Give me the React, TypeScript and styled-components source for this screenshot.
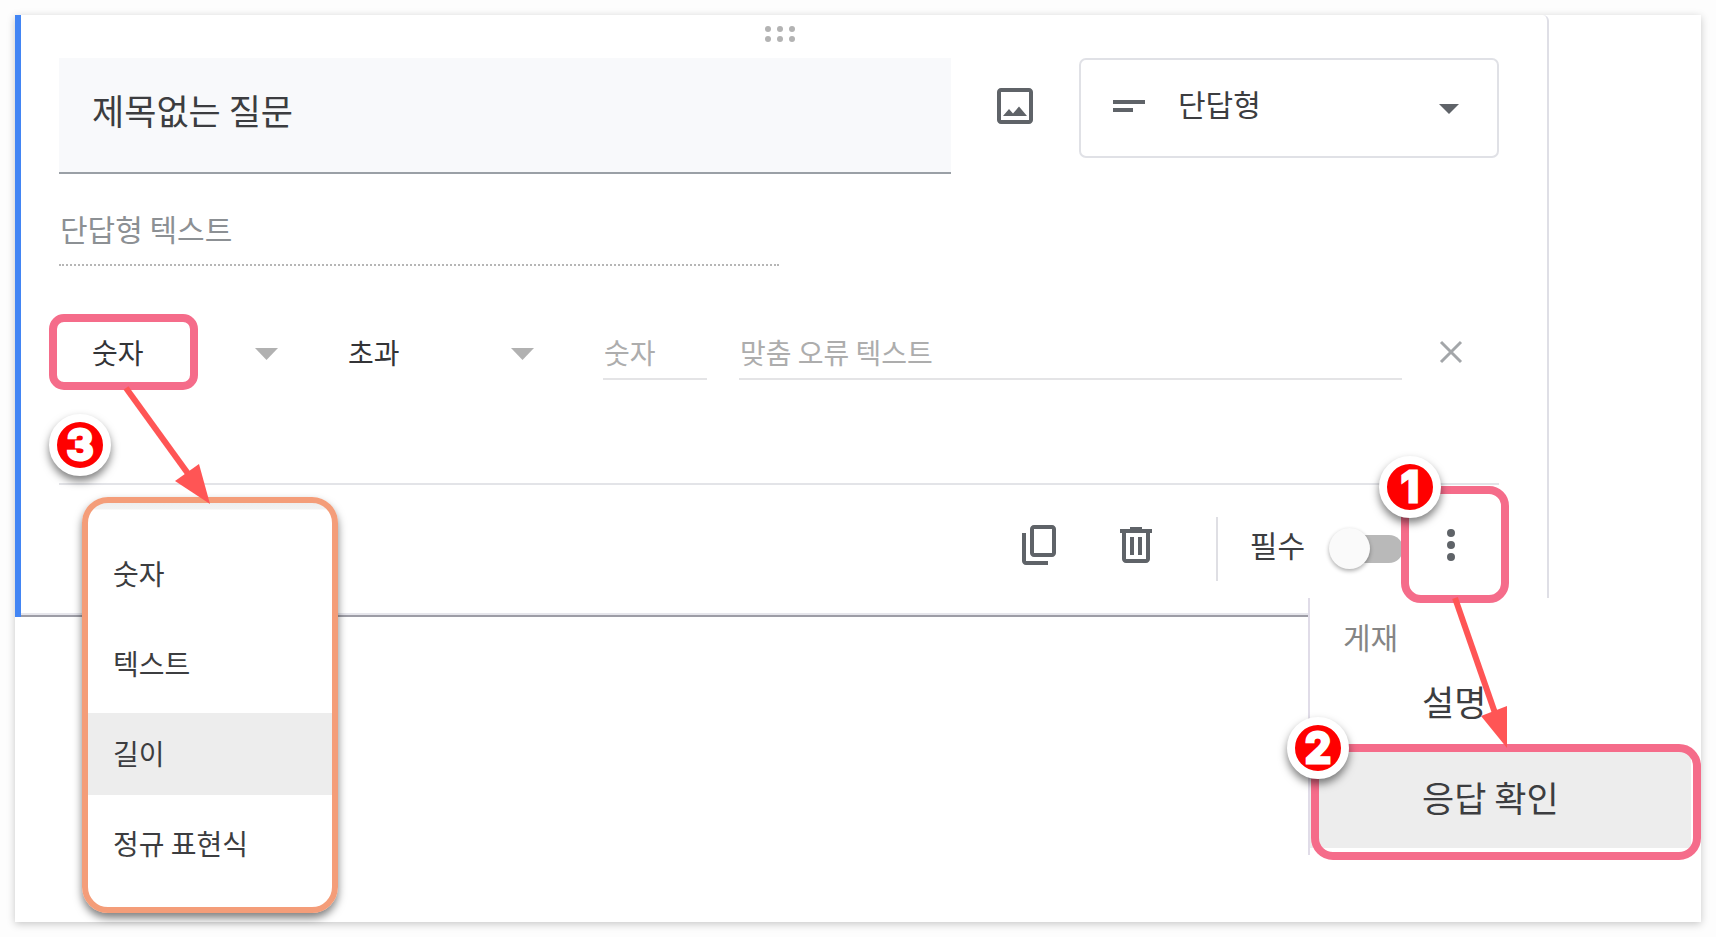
import React from 'react';
import styled, { createGlobalStyle, css } from 'styled-components';

const PINK = '#f56c8a';
const ICON_GREY = '#5f6368';

const GlobalStyle = createGlobalStyle`
  *, *::before, *::after { box-sizing: border-box; }
  body {
    margin: 0;
    background: #fdfdfd;
    color: #3c3d40;
    font-family: "Noto Sans CJK KR", "Noto Sans", sans-serif;
  }
  button, input, select {
    font: inherit;
    color: inherit;
    margin: 0;
    padding: 0;
    border: 0;
    border-radius: 0;
    background: none;
    outline: none;
  }
  button, select { cursor: pointer; }
  ul { list-style: none; margin: 0; padding: 0; }
`;

const Page = styled.div`
  min-height: 100vh;
  padding: 15px;
  display: flex;
`;

const Sheet = styled.main`
  flex: 1;
  min-width: 0;
  background: #fff;
  padding-right: 152px;
  box-shadow: 0 2px 8px rgba(0, 0, 0, 0.22);
`;

const Card = styled.section`
  display: flex;
`;

const Accent = styled.div`
  flex: 0 0 6px;
  background: #4285f4;
`;

const CardBody = styled.div`
  flex: 1;
  min-width: 0;
  padding: 0 48px 0 38px;
  border-right: 2px solid #dfdfe6;
  border-bottom: 2px solid #9d9da6;
  border-top-right-radius: 6px;
  box-shadow: inset 0 -2px 0 #e6e6ec;
`;

const Grip = styled.div`
  height: 43px;
  padding: 10px 0 0 2px;
  display: flex;
  justify-content: center;
`;

const HeadRow = styled.div`
  display: flex;
  align-items: flex-start;
  gap: 40px;
`;

const TitleInput = styled.input`
  && {
    flex: 1;
    min-width: 0;
    height: 116px;
    padding: 0 33px 12px;
    font-size: 35px;
    background: #f8f9fb;
    border-bottom: 2px solid #9aa0a6;
  }
`;

const IconButton = styled.button<{ $size?: number; $offset?: number }>`
  flex: none;
  width: ${p => p.$size ?? 48}px;
  height: 56px;
  margin-top: ${p => p.$offset ?? 0}px;
  display: flex;
  justify-content: center;
  align-items: flex-start;
`;

const TypeField = styled.label`
  position: relative;
  flex: none;
  width: 420px;
  height: 100px;
  display: flex;
  align-items: flex-start;
  border: 2px solid #e0e1e6;
  border-radius: 7px;

  > svg { position: absolute; top: 22px; pointer-events: none; }
  > svg:first-child { left: 24px; }
  > svg:last-child { right: 24px; top: 24px; }
`;

const TypeSelect = styled.select`
  && {
    appearance: none;
    width: 100%;
    height: 96px;
    padding: 0 80px 10px 97px;
    font-size: 30px;
  }
`;

const AnswerInput = styled.input`
  && {
    display: block;
    width: 50%;
    height: 64px;
    margin-top: 28px;
    padding: 0 1px 10px;
    font-size: 30px;
    border-bottom: 2px dotted #b6b6b6;
  }
  &::placeholder { color: #8c9094; opacity: 1; }
`;

const RuleRow = styled.div`
  display: flex;
  align-items: center;
  gap: 32px;
  height: 64px;
  margin-top: 56px;
  padding-right: 29px;
`;

const RuleSelects = styled.div`
  display: flex;
  flex: none;
`;

const RuleField = styled.div`
  position: relative;
  width: 256px;
  height: 64px;

  > label > svg { position: absolute; right: 37px; top: 26px; pointer-events: none; }
`;

const RuleSelect = styled.select`
  && {
    appearance: none;
    width: 100%;
    height: 64px;
    padding: 0 60px 4px 33px;
    font-size: 28px;
    color: #333437;
  }
`;

const RuleInput = styled.input<{ $grow?: boolean }>`
  && {
    ${p => (p.$grow ? css`flex: 1;` : css`flex: 0 0 104px;`)}
    min-width: 0;
    width: 104px;
    height: 52px;
    padding: 0 1px 2px;
    font-size: 28px;
    border-bottom: 2px solid #e4e4e6;
  }
  &::placeholder { color: #adadad; opacity: 1; }
`;

const Footer = styled.footer`
  height: 132px;
  margin-top: 97px;
  padding: 0 24px 2px 0;
  display: flex;
  align-items: center;
  justify-content: flex-end;
  gap: 24px;
  border-top: 2px solid #e3e4e8;
`;

const Actions = styled.div`
  display: flex;
  gap: 48px;
`;

const Separator = styled.div`
  width: 2px;
  height: 64px;
  margin: 0 8px 0 32px;
  background: #dfdfe4;
`;

const RequiredLabel = styled.label`
  display: flex;
  align-items: center;
  gap: 24px;
  font-size: 30px;
`;

const RequiredText = styled.span`
  padding-bottom: 10px;
  line-height: 44px;
`;

const Switch = styled.input`
  && {
    appearance: none;
    position: relative;
    width: 74px;
    height: 42px;
  }
  &::before {
    content: '';
    position: absolute;
    inset: 7px 0 7px 8px;
    border-radius: 14px;
    background: #b9b9b9;
  }
  &::after {
    content: '';
    position: absolute;
    left: 0;
    top: 0;
    width: 41px;
    height: 41px;
    border-radius: 50%;
    background: #fafafa;
    box-shadow: 0 2px 4px rgba(0, 0, 0, 0.32);
  }
  &:checked::after { left: 33px; }
`;

const MoreAnchor = styled.div`
  position: relative;
`;

const Ring = styled.span<{ $inset: string; $radius: number }>`
  position: absolute;
  z-index: 2;
  inset: ${p => p.$inset};
  border: 8px solid ${PINK};
  border-radius: ${p => p.$radius}px;
  pointer-events: none;
`;

const Badge = styled.span<{ $left: number; $top: number }>`
  position: absolute;
  left: ${p => p.$left}px;
  top: ${p => p.$top}px;
  z-index: 4;
  width: 62px;
  height: 62px;
  display: flex;
  align-items: center;
  justify-content: center;
  border: 8px solid #fff;
  border-radius: 50%;
  background: #f00;
  color: #fff;
  font: 700 42px/46px Inter, sans-serif;
  -webkit-text-stroke: 3px #fff;
  stroke-linejoin: round;
  box-shadow: 0 5px 8px rgba(0, 0, 0, 0.5);
  pointer-events: none;
`;

const ArrowLayer = styled.svg`
  position: absolute;
  left: -1px;
  top: 0;
  z-index: 3;
  overflow: visible;
  pointer-events: none;
`;

const TypeMenu = styled.ul`
  position: absolute;
  z-index: 2;
  left: 23px;
  top: 175px;
  width: 256px;
  padding: 30px 0 22px;
  display: flex;
  flex-direction: column;
  gap: 8px;
  border: 6px solid #f49d79;
  border-radius: 26px;
  background: linear-gradient(#eee, #f2f2f2 6px, #fff 7px);
  box-shadow: 0 5px 9px rgba(0, 0, 0, 0.5);
`;

const TypeOption = styled.button<{ $active?: boolean }>`
  && {
    display: block;
    width: 100%;
    height: 82px;
    padding: 0 25px 2px;
    font-size: 28px;
    text-align: left;
    background: ${p => (p.$active ? '#ededed' : 'none')};
  }
`;

const MoreMenu = styled.div`
  position: absolute;
  z-index: 1;
  top: 77px;
  right: -226px;
  width: 393px;
  padding: 18px 10px 7px 0;
  border-left: 2px solid #e0dce8;
  background: #fff;
`;

const MoreHeading = styled.div`
  padding-left: 33px;
  font-size: 30px;
  line-height: 40px;
  color: #858585;
`;

const MoreItem = styled.li`
  position: relative;
`;

const MoreOption = styled.button<{ $active?: boolean }>`
  && {
    display: block;
    width: 100%;
    height: 96px;
    padding: 0 0 8px 112px;
    font-size: 35px;
    text-align: left;
    background: ${p => (p.$active ? '#ededed' : 'none')};
  }
`;

const Icon = ({ d, size = 48 }: { d: string; size?: number }) => (
  <svg width={size} height={size} viewBox="0 0 24 24" fill={ICON_GREY} aria-hidden="true">
    <path fillRule="evenodd" d={d} />
  </svg>
);

const icons = {
  image:
    'M19 3H5c-1.1 0-2 .9-2 2v14c0 1.1.9 2 2 2h14c1.1 0 2-.9 2-2V5c0-1.1-.9-2-2-2zm0 16H5V5h14v14zM14 12.3l-3 3.5-2-2.3L6 17h12l-4-4.7z',
  shortText: 'M4 9h16v2H4zM4 13h10v2H4z',
  dropDown: 'M7 10l5 5 5-5z',
  copy:
    'M18 2H9c-1.1 0-2 .9-2 2v12c0 1.1.9 2 2 2h9c1.1 0 2-.9 2-2V4c0-1.1-.9-2-2-2zm0 14H9V4h9v12zM3 6h2v14h11v2H5c-1.1 0-2-.9-2-2V6z',
  trash:
    'M15 4V3H9v1H4v2h1v13c0 1.1.9 2 2 2h10c1.1 0 2-.9 2-2V6h1V4h-5zm2 15H7V6h10v13zM9 8h2v9H9zM13 8h2v9h-2z',
  more:
    'M12 8a2 2 0 1 0 0-4 2 2 0 0 0 0 4zM12 14a2 2 0 1 0 0-4 2 2 0 0 0 0 4zM12 20a2 2 0 1 0 0-4 2 2 0 0 0 0 4z',
};

const SmallCaret = () => (
  <svg width="23" height="12" viewBox="0 0 23 12" fill="#b1b1b1" aria-hidden="true">
    <path d="M0 0h23L11.500 12z" />
  </svg>
);

const ruleTypes = ['숫자', '텍스트', '길이', '정규 표현식'];

export default function App() {
  return (
    <>
      <GlobalStyle />
      <Page>
        <Sheet>
          <Card>
            <Accent />
            <CardBody>
              <Grip>
                <svg width="30" height="17" viewBox="0 0 30 17" fill="#b3b3b3" aria-hidden="true">
                  {[3, 15, 27].map(x => [4, 14].map(y => <circle key={`${x}-${y}`} cx={x} cy={y} r="3" />))}
                </svg>
              </Grip>

              <HeadRow>
                <TitleInput aria-label="질문" defaultValue="제목없는 질문" />
                <IconButton $offset={24} type="button" aria-label="이미지 추가">
                  <Icon d={icons.image} />
                </IconButton>
                <TypeField>
                  <Icon d={icons.shortText} />
                  <TypeSelect aria-label="질문 유형">
                    <option>단답형</option>
                  </TypeSelect>
                  <Icon d={icons.dropDown} />
                </TypeField>
              </HeadRow>

              <AnswerInput aria-label="답변" placeholder="단답형 텍스트" readOnly />

              <RuleRow>
                <RuleSelects>
                  <RuleField>
                    <label>
                      <RuleSelect aria-label="확인 유형">
                        {ruleTypes.map(t => (
                          <option key={t}>{t}</option>
                        ))}
                      </RuleSelect>
                      <SmallCaret />
                    </label>
                    <Ring $inset="-8px 117px -4px -10px" $radius={15} />
                    <TypeMenu>
                      {ruleTypes.map(t => (
                        <li key={t}>
                          <TypeOption type="button" $active={t === '길이'}>
                            {t}
                          </TypeOption>
                        </li>
                      ))}
                    </TypeMenu>
                    <ArrowLayer width="160" height="190" fill="#ff5555" aria-hidden="true">
                      <path d="M68 66L131 153" stroke="#ff5555" strokeWidth="6" />
                      <path d="M152 182L117 159L141 142z" />
                    </ArrowLayer>
                    <Badge $left={-10} $top={92}>3</Badge>
                  </RuleField>
                  <RuleField>
                    <label>
                      <RuleSelect aria-label="조건">
                        <option>초과</option>
                      </RuleSelect>
                      <SmallCaret />
                    </label>
                  </RuleField>
                </RuleSelects>
                <RuleInput aria-label="값" placeholder="숫자" />
                <RuleInput $grow aria-label="오류 메시지" placeholder="맞춤 오류 텍스트" />
                <IconButton $size={36} type="button" aria-label="삭제">
                  <svg width="36" height="52" viewBox="0 0 36 52" stroke="#a3a6a9" strokeWidth="3" aria-hidden="true">
                    <path d="M7 16L27 36M27 16L7 36" />
                  </svg>
                </IconButton>
              </RuleRow>

              <Footer>
                <Actions>
                  <IconButton type="button" aria-label="복사">
                    <Icon d={icons.copy} />
                  </IconButton>
                  <IconButton type="button" aria-label="질문 삭제">
                    <Icon d={icons.trash} />
                  </IconButton>
                </Actions>
                <Separator />
                <RequiredLabel>
                  <RequiredText>필수</RequiredText>
                  <Switch type="checkbox" role="switch" />
                </RequiredLabel>
                <MoreAnchor>
                  <IconButton type="button" aria-label="옵션 더보기">
                    <Icon d={icons.more} />
                  </IconButton>
                  <MoreMenu>
                    <MoreHeading>게재</MoreHeading>
                    <ul>
                      <MoreItem>
                        <MoreOption type="button">설명</MoreOption>
                      </MoreItem>
                      <MoreItem>
                        <MoreOption type="button" $active>
                          응답 확인
                        </MoreOption>
                        <Ring $inset="-8px -10px -12px 1px" $radius={22} />
                        <Badge $left={-23} $top={-35}>2</Badge>
                      </MoreItem>
                    </ul>
                  </MoreMenu>
                  <Ring $inset="-35px -34px -26px -26px" $radius={20} />
                  <ArrowLayer width="90" height="230" fill="#ff5555" aria-hidden="true">
                    <path d="M29 77L69 192" stroke="#ff5555" strokeWidth="6" />
                    <path d="M81 227L55 195L81 185z" />
                  </ArrowLayer>
                  <Badge $left={-48} $top={-65}>1</Badge>
                </MoreAnchor>
              </Footer>
            </CardBody>
          </Card>
        </Sheet>
      </Page>
    </>
  );
}
